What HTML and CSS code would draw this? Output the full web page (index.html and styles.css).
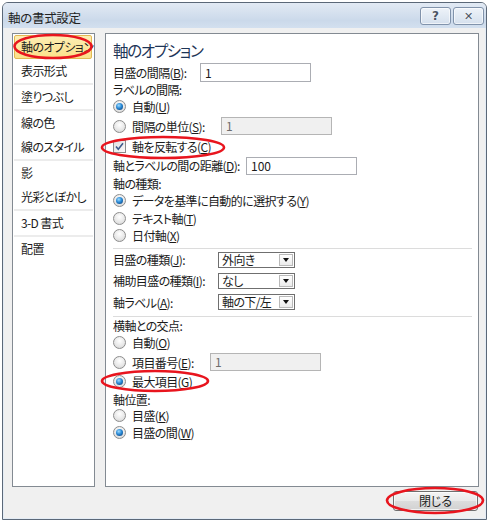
FILE: index.html
```html
<!DOCTYPE html>
<html lang="ja">
<head>
<meta charset="utf-8">
<title>軸の書式設定</title>
<link rel="stylesheet" href="styles.css">
</head>
<body>
<div class="window">
  <div class="titlebar">
    <span class="title">軸の書式設定</span>
    <div class="tbtns">
      <span class="tbtn">?</span>
      <span class="tbtn tbtn-x">✕</span>
    </div>
  </div>
  <div class="main">
    <ul class="nav">
      <li class="nav-item active">軸のオプション</li>
      <li class="nav-item">表示形式</li>
      <li class="nav-sep"></li>
      <li class="nav-item">塗りつぶし</li>
      <li class="nav-sep"></li>
      <li class="nav-item">線の色</li>
      <li class="nav-item">線のスタイル</li>
      <li class="nav-sep"></li>
      <li class="nav-item">影</li>
      <li class="nav-item">光彩とぼかし</li>
      <li class="nav-sep"></li>
      <li class="nav-item">3-D 書式</li>
      <li class="nav-sep"></li>
      <li class="nav-item">配置</li>
    </ul>
    <div class="panel">
      <div class="heading">軸のオプション</div>

      <div class="row r20"><span class="lbl lbl-interval">目盛の間隔(<u>B</u>):</span><span class="field">1</span></div>
      <div class="row r15"><span class="lbl">ラベルの間隔:</span></div>
      <div class="row r18"><span class="radio on"></span><span class="opt">自動(<u>U</u>)</span></div>
      <div class="row r22"><span class="radio"></span><span class="opt opt-unit">間隔の単位(<u>S</u>):</span><span class="field disabled">1</span></div>
      <div class="row r18"><span class="check"><svg viewBox="0 0 13 13" width="13" height="13"><path d="M3 6.5 L5.3 9.2 L10 3.2" fill="none" stroke="#3d5a8c" stroke-width="1.6"/></svg></span><span class="opt">軸を反転する(<u>C</u>)</span></div>
      <div class="row r21"><span class="lbl lbl-dist">軸とラベルの間の距離(<u>D</u>):</span><span class="field field-short">100</span></div>
      <div class="row r15"><span class="lbl">軸の種類:</span></div>
      <div class="row r18"><span class="radio on"></span><span class="opt">データを基準に自動的に選択する(<u>Y</u>)</span></div>
      <div class="row r18"><span class="radio"></span><span class="opt">テキスト軸(<u>T</u>)</span></div>
      <div class="row r17"><span class="radio"></span><span class="opt">日付軸(<u>X</u>)</span></div>

      <div class="sep sep-a"></div>

      <div class="row r21"><span class="lbl lbl-sel">目盛の種類(<u>J</u>):</span><span class="select"><span class="sel-val">外向き</span><span class="sel-btn"></span></span></div>
      <div class="row r21"><span class="lbl lbl-sel">補助目盛の種類(<u>I</u>):</span><span class="select"><span class="sel-val">なし</span><span class="sel-btn"></span></span></div>
      <div class="row r22"><span class="lbl lbl-sel">軸ラベル(<u>A</u>):</span><span class="select"><span class="sel-val">軸の下/左</span><span class="sel-btn"></span></span></div>

      <div class="sep sep-b"></div>

      <div class="row r16"><span class="lbl">横軸との交点:</span></div>
      <div class="row r19"><span class="radio"></span><span class="opt">自動(<u>O</u>)</span></div>
      <div class="row r20"><span class="radio"></span><span class="opt opt-item">項目番号(<u>E</u>):</span><span class="field disabled">1</span></div>
      <div class="row r19"><span class="radio on"></span><span class="opt">最大項目(<u>G</u>)</span></div>
      <div class="row r16"><span class="lbl">軸位置:</span></div>
      <div class="row r17"><span class="radio"></span><span class="opt">目盛(<u>K</u>)</span></div>
      <div class="row r17"><span class="radio on"></span><span class="opt">目盛の間(<u>W</u>)</span></div>
    </div>
  </div>
  <div class="footer">
    <button class="close-btn">閉じる</button>
  </div>
</div>
<svg class="marks" width="490" height="522" viewBox="0 0 490 522">
  <ellipse cx="53" cy="46.5" rx="38.5" ry="11.5"/>
  <ellipse cx="163" cy="147.5" rx="61" ry="10.5"/>
  <ellipse cx="155" cy="381" rx="53" ry="10"/>
  <ellipse cx="435" cy="500.5" rx="48" ry="12.5"/>
</svg>
</body>
</html>
```

FILE: styles.css
```css
* { box-sizing: border-box; }
html, body { margin: 0; padding: 0; }
body {
  width: 490px;
  height: 522px;
  background: #ffffff;
  position: relative;
  overflow: hidden;
  font-family: "Noto Sans CJK JP", "Noto Sans", sans-serif;
  font-feature-settings: "palt";
  font-size: 12px;
  color: #1b1b1b;
}
u { text-decoration: underline; text-underline-offset: 1px; }

.window {
  margin: 2px 0 0 2px;
  width: 485px;
  height: 518px;
  border: 1px solid #5b6878;
  border-radius: 6px 6px 0 0;
  background: #f0f0f0;
  box-shadow: inset 0 0 0 1px #e4ecf5;
  display: flex;
  flex-direction: column;
}

.titlebar {
  height: 25px;
  flex: none;
  display: flex;
  justify-content: space-between;
  align-items: flex-start;
  padding: 4px 2px 0 5px;
  border-radius: 5px 5px 0 0;
  background: linear-gradient(#e2eaf4, #cbd9ea 70%, #d3e0ef);
}
.title {
  font-size: 12.5px;
  line-height: 18px;
  color: #222;
  padding-top: 2px;
  letter-spacing: -0.3px;
}
.tbtns { display: flex; gap: 2px; }
.tbtn {
  width: 31px;
  height: 18px;
  border: 1px solid #8193ab;
  border-radius: 3px;
  background: linear-gradient(#eef3f9, #d5e0ed);
  box-shadow: inset 0 0 0 1px rgba(255,255,255,0.6);
  display: flex;
  align-items: center;
  justify-content: center;
  font-family: "DejaVu Sans", sans-serif;
  font-weight: bold;
  font-size: 12px;
  color: #4b5563;
  text-shadow: 0 0 2px #fff;
}
.tbtn-x { font-size: 11px; }

.main {
  flex: none;
  display: flex;
  gap: 10px;
  padding: 5px 0 0 9px;
  height: 459px;
}

.nav {
  list-style: none;
  margin: 0;
  padding: 0;
  width: 83px;
  height: 454px;
  border: 1px solid #838a92;
  background: #fff;
  letter-spacing: -0.6px;
}
.nav-item {
  height: 24px;
  line-height: 24px;
  padding-left: 7px;
  margin: 0 2px 0 1px;
  white-space: nowrap;
  color: #1b1b1b;
}
.nav-item.active {
  margin-top: 1px;
  padding-left: 6px;
  background: linear-gradient(#fdeeb3, #fbe08a);
  border: 1px solid #e2b954;
  border-radius: 2px;
  line-height: 22px;
}
.nav-sep {
  height: 2px;
  margin: 0 1px;
  background: #ececec;
}

.panel {
  width: 374px;
  height: 454px;
  border: 1px solid #838a92;
  background: #fff;
  padding: 4px 7px 0 7px;
  letter-spacing: -0.6px;
}
.heading {
  height: 24px;
  line-height: 24px;
  font-size: 15.5px;
  letter-spacing: -1.3px;
  color: #1d3557;
}

.row {
  display: flex;
  align-items: center;
  white-space: nowrap;
  line-height: 15px;
}
.r15 { height: 15px; }
.r16 { height: 16px; }
.r17 { height: 17px; }
.r18 { height: 18px; }
.r19 { height: 19px; }
.r20 { height: 20px; }
.r21 { height: 21px; }
.r22 { height: 22px; }

.lbl-interval { width: 87px; }
.lbl-dist { width: 133px; }
.lbl-sel { width: 105px; }
.opt { margin-left: 6px; }
.opt-unit { width: 89px; }
.opt-item { width: 78px; }

.field {
  width: 111px;
  height: 19px;
  border: 1px solid #abadb3;
  background: #fff;
  padding-left: 4px;
  line-height: 17px;
  font-size: 12px;
  letter-spacing: 0;
}
.field-short { height: 18px; line-height: 16px; }
.field.disabled {
  height: 18px;
  line-height: 16px;
  background: #f0f0f0;
  border-color: #b5b5b5;
  color: #6d6d6d;
}

.radio {
  width: 13px;
  height: 13px;
  flex: none;
  border-radius: 50%;
  border: 1px solid #8d8d8d;
  background: radial-gradient(circle at 50% 35%, #ffffff, #e6e6e6 60%, #cfcfcf);
  display: flex;
  align-items: center;
  justify-content: center;
}
.radio.on::after {
  content: "";
  width: 7px;
  height: 7px;
  border-radius: 50%;
  background: radial-gradient(circle at 40% 35%, #9fdcff, #2a8ad6 45%, #0b3f7a 90%);
}
.check {
  width: 13px;
  height: 13px;
  flex: none;
  border: 1px solid #8d8d8d;
  background: linear-gradient(135deg, #e0e0e0, #fafafa);
  display: flex;
  align-items: center;
  justify-content: center;
}
.check svg { display: block; margin: -1px; }

.sep { height: 1px; background: #dcdcdc; margin-right: -1px; }
.sep-a { margin-top: 4px; }
.sep-b { margin-top: 3px; }

.select {
  width: 77px;
  height: 16px;
  border: 1px solid #6f6f6f;
  background: #fff;
  display: flex;
  align-items: center;
  justify-content: space-between;
  padding: 0 1px 0 3px;
}
.sel-val { line-height: 14px; }
.sel-btn {
  width: 14px;
  height: 12px;
  border: 1px solid #b9b9b9;
  background: linear-gradient(#ffffff, #ebebeb);
  display: flex;
  align-items: center;
  justify-content: center;
}
.sel-btn::after {
  content: "";
  border-left: 3.5px solid transparent;
  border-right: 3.5px solid transparent;
  border-top: 4px solid #111;
}

.footer {
  flex: none;
  display: flex;
  justify-content: flex-end;
  padding: 4px 8px 0 0;
}
.close-btn {
  width: 85px;
  height: 20px;
  border: 1px solid #707070;
  border-radius: 3px;
  background: linear-gradient(#f4f4f4, #e9e9e9 50%, #dcdcdc 51%, #d2d2d2);
  box-shadow: inset 0 0 0 1px rgba(255,255,255,0.7);
  font-family: "Noto Sans CJK JP", sans-serif;
  font-feature-settings: "palt";
  font-size: 12px;
  color: #1b1b1b;
  padding: 0;
  line-height: 16px;
}

.marks {
  position: absolute;
  left: 0;
  top: 0;
  pointer-events: none;
}
.marks ellipse {
  fill: none;
  stroke: #e8151e;
  stroke-width: 2.6;
}
```
